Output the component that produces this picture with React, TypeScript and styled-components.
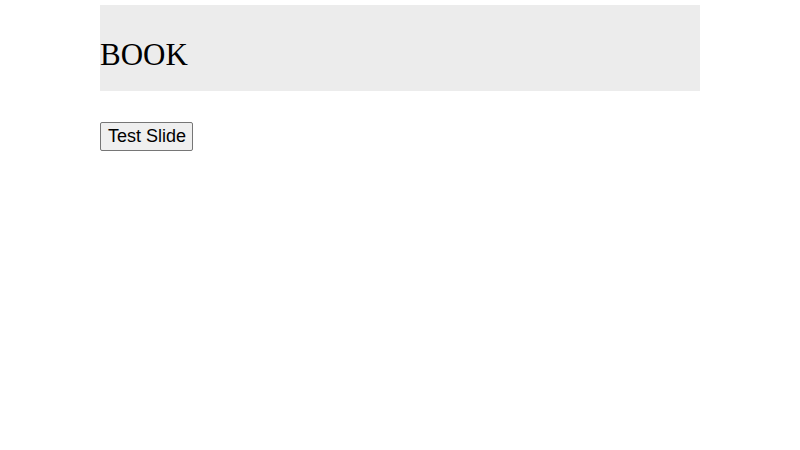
import styled, { createGlobalStyle } from "styled-components";

const GlobalStyle = createGlobalStyle`
  body {
    margin: 0;
    background: #ffffff;
  }
`;

const Page = styled.div`
  width: 600px;
  margin: 0 auto;
  padding-top: 5px;
  display: flex;
  flex-direction: column;
  align-items: flex-start;
`;

const Header = styled.header`
  align-self: stretch;
  height: 86px;
  box-sizing: border-box;
  padding-top: 32px;
  background-color: #ececec;
`;

const Title = styled.h1`
  margin: 0;
  font-family: "Liberation Serif", "Times New Roman", serif;
  font-size: 31px;
  font-weight: normal;
  color: #000;
`;

const SlideButton = styled.button`
  margin-top: 31px;
  height: 29px;
  padding: 0 6px 0 7px;
  font-family: "Liberation Sans", Arial, sans-serif;
  font-size: 18px;
  color: #000;
  background-color: #efefef;
  border: 1px solid #767676;
  border-radius: 2px;
`;

const App = (): JSX.Element => {
  return (
    <>
      <GlobalStyle />
      <Page>
        <Header>
          <Title>BOOK</Title>
        </Header>
        <SlideButton>Test Slide</SlideButton>
      </Page>
    </>
  );
};

export default App;
